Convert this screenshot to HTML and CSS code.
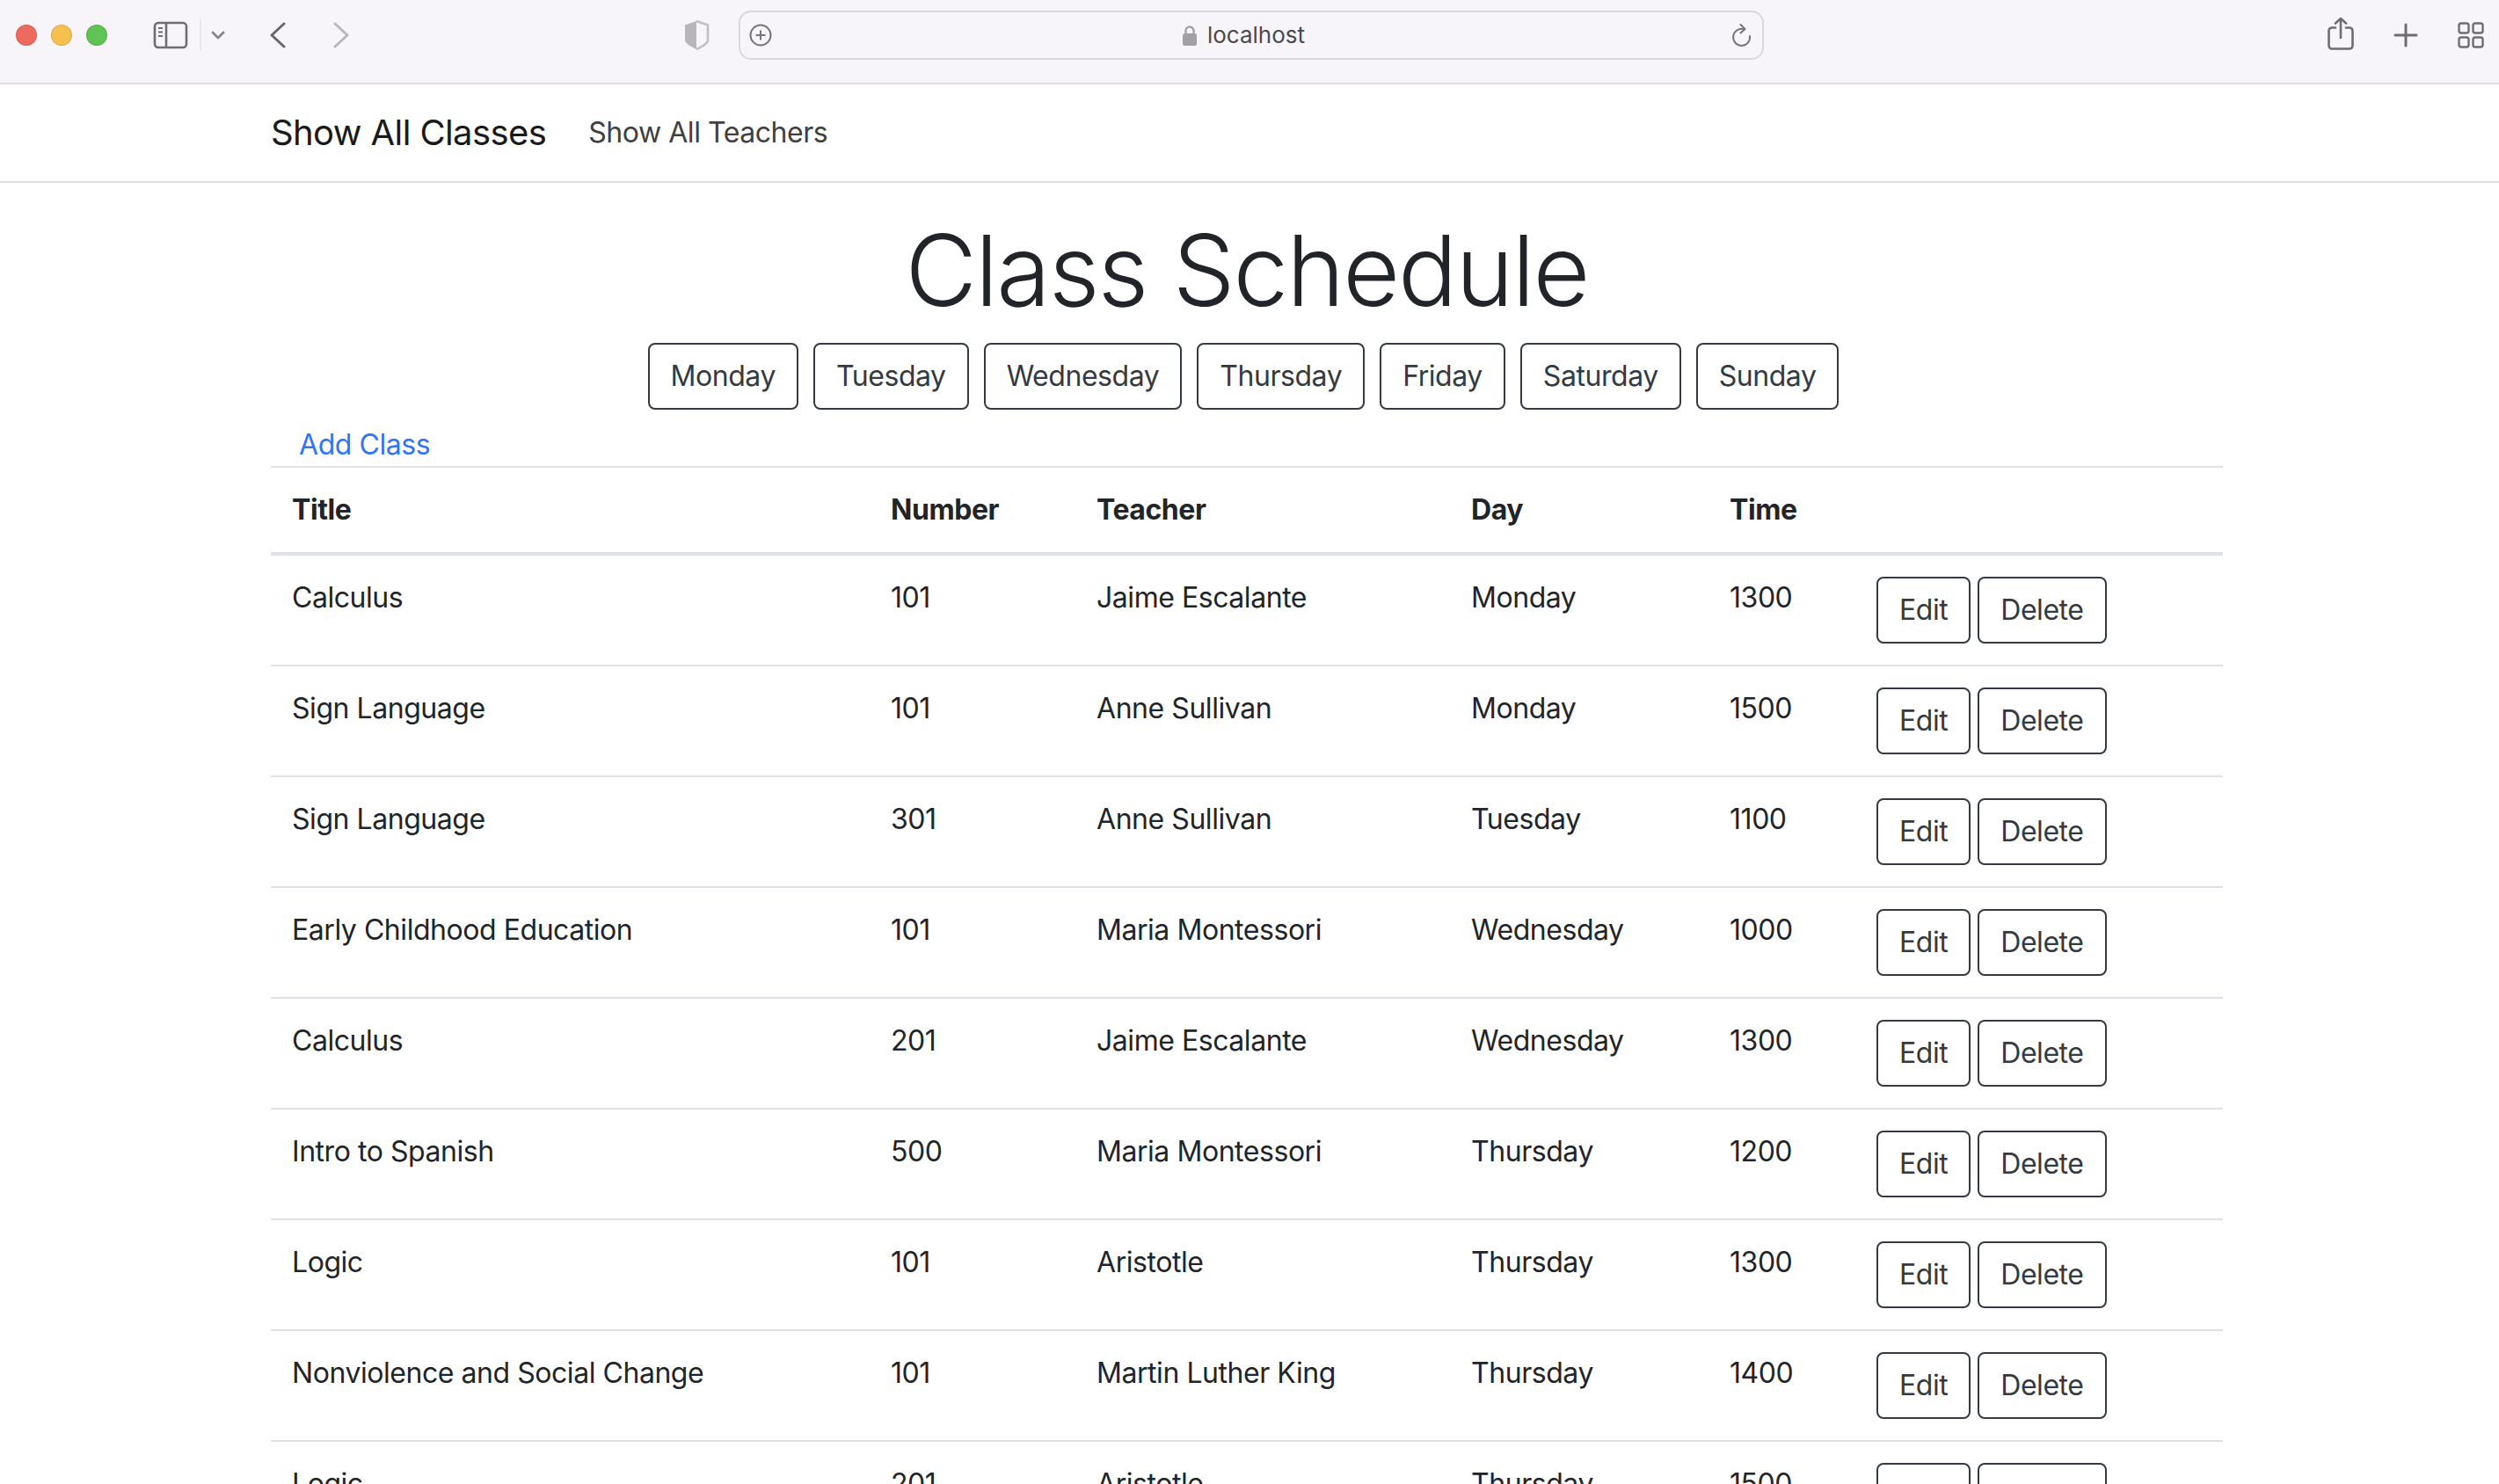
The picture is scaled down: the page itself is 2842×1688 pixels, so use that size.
FILE: index.html
```html
<!DOCTYPE html>
<html lang="en">
<head>
<meta charset="utf-8">
<title>Class Schedule</title>
<link rel="stylesheet" href="styles.css">
</head>
<body>
<header class="toolbar">
  <span class="light light-red"></span>
  <span class="light light-yellow"></span>
  <span class="light light-green"></span>
  <svg class="ti ti-sidebar" width="40" height="32" viewBox="0 0 40 32" fill="none" stroke="#6f6c72" stroke-width="2.6"><rect x="2" y="2" width="36" height="28" rx="4"/><path d="M15 2v28"/><path d="M6 8h5M6 12.500h5M6 17h5" stroke-width="2"/></svg>
  <span class="ti-divider"></span>
  <svg class="ti ti-chev" width="16" height="11" viewBox="0 0 16 11" fill="none" stroke="#88858c" stroke-width="2.800" stroke-linecap="round" stroke-linejoin="round"><path d="M2 2l6 6 6-6"/></svg>
  <svg class="ti ti-back" width="18" height="30" viewBox="0 0 18 30" fill="none" stroke="#69666c" stroke-width="3" stroke-linecap="round" stroke-linejoin="round"><path d="M16 2L2 15l14 13"/></svg>
  <svg class="ti ti-fwd" width="18" height="30" viewBox="0 0 18 30" fill="none" stroke="#b9b7bc" stroke-width="3" stroke-linecap="round" stroke-linejoin="round"><path d="M2 2l14 13L2 28"/></svg>
  <svg class="ti ti-shield" width="30" height="36" viewBox="0 0 30 36" fill="none"><path d="M15 2L2 6.500V24c0 3 8 8 13 10z" fill="#b8b5bb"/><path d="M15 2l13 4.500V24c0 3-8 8-13 10" stroke="#c2c0c5" stroke-width="2.600"/></svg>
  <div class="urlbar">
    <svg class="ti-plus-c" width="26" height="26" viewBox="0 0 26 26" fill="none" stroke="#77747a" stroke-width="2"><circle cx="13" cy="13" r="11.500"/><path d="M13 7.500v11M7.500 13h11"/></svg>
    <div class="url-center">
      <svg width="16" height="24" viewBox="0 0 16 24" fill="none"><path d="M3.500 11V7a4.500 4.500 0 0 1 9 0v4" stroke="#a3a1a6" stroke-width="2.400"/><rect x="0" y="10" width="16" height="14" rx="2.500" fill="#a3a1a6"/></svg>
      <span class="url-text">localhost</span>
    </div>
    <svg class="ti-reload" width="23" height="27" viewBox="0 0 23 27" fill="none" stroke="#77747a" stroke-width="2" stroke-linecap="round" stroke-linejoin="round"><path d="M14 6.200A9.500 9.500 0 1 0 21 14"/><path d="M10.500 1L15.500 6l-5 4.500"/></svg>
  </div>
  <svg class="ti ti-share" width="30" height="38" viewBox="0 0 30 38" fill="none" stroke="#6f6c72" stroke-width="2.600" stroke-linecap="round" stroke-linejoin="round"><path d="M9 12.500H5a3.500 3.500 0 0 0-3.500 3.500v17A3.500 3.500 0 0 0 5 36.500h20a3.500 3.500 0 0 0 3.500-3.500V16a3.500 3.500 0 0 0-3.500-3.500h-4"/><path d="M15 24V2M9 7.500L15 2l6 5.500"/></svg>
  <svg class="ti ti-plus" width="28" height="28" viewBox="0 0 28 28" fill="none" stroke="#6f6c72" stroke-width="3" stroke-linecap="round"><path d="M14 2v24M2 14h24"/></svg>
  <svg class="ti ti-grid" width="30" height="30" viewBox="0 0 30 30" fill="none" stroke="#6f6c72" stroke-width="2.400"><rect x="1.500" y="1.500" width="11" height="11" rx="2.500"/><rect x="17.500" y="1.500" width="11" height="11" rx="2.500"/><rect x="1.500" y="17.500" width="11" height="11" rx="2.500"/><rect x="17.500" y="17.500" width="11" height="11" rx="2.500"/></svg>
</header>

<nav class="navbar">
  <a class="brand" href="#">Show All Classes</a>
  <a class="nav-link" href="#">Show All Teachers</a>
</nav>

<main class="container">
  <h1 class="heading">Class Schedule</h1>
  <div class="days">
    <a class="btn btn-monday" href="#">Monday</a>
    <a class="btn" href="#">Tuesday</a>
    <a class="btn" href="#">Wednesday</a>
    <a class="btn" href="#">Thursday</a>
    <a class="btn" href="#">Friday</a>
    <a class="btn" href="#">Saturday</a>
    <a class="btn" href="#">Sunday</a>
  </div>
  <a class="add-link" href="#">Add Class</a>
  <table class="schedule">
    <colgroup>
      <col class="c-title"><col class="c-number"><col class="c-teacher"><col class="c-day"><col class="c-time"><col class="c-actions">
    </colgroup>
    <thead>
      <tr><th>Title</th><th>Number</th><th>Teacher</th><th>Day</th><th>Time</th><th></th></tr>
    </thead>
    <tbody>
      <tr><td>Calculus</td><td>101</td><td>Jaime Escalante</td><td>Monday</td><td>1300</td><td><div class="actions"><a class="btn btn-edit" href="#">Edit</a><a class="btn" href="#">Delete</a></div></td></tr>
      <tr><td>Sign Language</td><td>101</td><td>Anne Sullivan</td><td>Monday</td><td>1500</td><td><div class="actions"><a class="btn btn-edit" href="#">Edit</a><a class="btn" href="#">Delete</a></div></td></tr>
      <tr><td>Sign Language</td><td>301</td><td>Anne Sullivan</td><td>Tuesday</td><td>1100</td><td><div class="actions"><a class="btn btn-edit" href="#">Edit</a><a class="btn" href="#">Delete</a></div></td></tr>
      <tr><td>Early Childhood Education</td><td>101</td><td>Maria Montessori</td><td>Wednesday</td><td>1000</td><td><div class="actions"><a class="btn btn-edit" href="#">Edit</a><a class="btn" href="#">Delete</a></div></td></tr>
      <tr><td>Calculus</td><td>201</td><td>Jaime Escalante</td><td>Wednesday</td><td>1300</td><td><div class="actions"><a class="btn btn-edit" href="#">Edit</a><a class="btn" href="#">Delete</a></div></td></tr>
      <tr><td>Intro to Spanish</td><td>500</td><td>Maria Montessori</td><td>Thursday</td><td>1200</td><td><div class="actions"><a class="btn btn-edit" href="#">Edit</a><a class="btn" href="#">Delete</a></div></td></tr>
      <tr><td>Logic</td><td>101</td><td>Aristotle</td><td>Thursday</td><td>1300</td><td><div class="actions"><a class="btn btn-edit" href="#">Edit</a><a class="btn" href="#">Delete</a></div></td></tr>
      <tr><td>Nonviolence and Social Change</td><td>101</td><td>Martin Luther King</td><td>Thursday</td><td>1400</td><td><div class="actions"><a class="btn btn-edit" href="#">Edit</a><a class="btn" href="#">Delete</a></div></td></tr>
      <tr><td>Logic</td><td>201</td><td>Aristotle</td><td>Thursday</td><td>1500</td><td><div class="actions"><a class="btn btn-edit" href="#">Edit</a><a class="btn" href="#">Delete</a></div></td></tr>
    </tbody>
  </table>
</main>
</body>
</html>
```
FILE: styles.css
```css
* { box-sizing: border-box; }
html, body { margin: 0; height: 100%; overflow: hidden; background: #fff; }
body {
  font-family: Inter, "Liberation Sans", sans-serif;
  font-size: 32px;
  line-height: 48px;
  letter-spacing: -0.45px;
  color: #212529;
}
a { text-decoration: none; }

.toolbar {
  display: flex;
  align-items: center;
  height: 96px;
  padding-bottom: 14px;
  padding-left: 18px;
  background: #f8f5fa;
  border-bottom: 2px solid #dfdde0;
}
.toolbar svg { flex: none; display: block; }
.light { width: 24px; height: 24px; border-radius: 50%; margin-right: 16px; border: 1px solid rgba(0,0,0,.12); }
.light-red { background: #ee6a5f; }
.light-yellow { background: #f6c04f; }
.light-green { background: #5fc454; margin-right: 0; }
.ti-sidebar { margin-left: 52px; }
.ti-divider { width: 2px; height: 36px; background: #e8e6ea; margin-left: 13px; }
.ti-chev { margin-left: 11px; }
.ti-back { margin-left: 51px; }
.ti-fwd { margin-left: 54px; }
.ti-shield { margin-left: 380px; }
.urlbar {
  display: flex;
  align-items: center;
  width: 1166px;
  height: 56px;
  margin-left: 33px;
  padding: 0 12px 0 10px;
  border: 2px solid #dcd9de;
  border-radius: 14px;
}
.url-center { flex: 1; display: flex; align-items: center; justify-content: center; gap: 12px; padding-right: 18px; }
.url-text { font-size: 26px; line-height: 32px; letter-spacing: 0; color: #4b494d; }
.ti-share { margin-left: 641px; margin-bottom: 4px; }
.ti-plus { margin-left: 45px; }
.ti-grid { margin-left: 45px; }

.navbar {
  display: flex;
  align-items: center;
  height: 112px;
  padding-left: 308px;
  border-bottom: 2px solid #dfdfdf;
}
.brand { font-size: 40px; line-height: 60px; color: #1a1a1a; margin-right: 48px; letter-spacing: -0.6px; }
.nav-link { color: #404040; }

.container { width: 2220px; margin-left: 308px; }
.heading {
  margin: 32px 0 16px;
  font-size: 112px;
  line-height: 134px;
  font-weight: 300;
  letter-spacing: -2px;
  text-align: center;
}
.days { display: flex; justify-content: center; gap: 17px; padding-right: 8px; }
.btn {
  display: inline-block;
  padding: 12px 24px;
  height: 76px;
  border: 2px solid #343a40;
  border-radius: 8px;
  color: #343a40;
  white-space: nowrap;
}
.add-link { display: block; margin: 16px 0 0 32px; color: #2f75f6; }

.schedule { width: 100%; table-layout: fixed; border-collapse: collapse; }
.c-title { width: 681px; }
.c-number { width: 234px; }
.c-teacher { width: 426px; }
.c-day { width: 294px; }
.c-time { width: 167px; }
.schedule th, .schedule td { padding: 24px; text-align: left; vertical-align: top; white-space: nowrap; }
.schedule th { font-weight: 700; border-top: 2px solid #dee2e6; border-bottom: 4px solid #dee2e6; }
.schedule td { border-bottom: 2px solid #dee2e6; }
.actions { display: flex; gap: 8px; }
```
